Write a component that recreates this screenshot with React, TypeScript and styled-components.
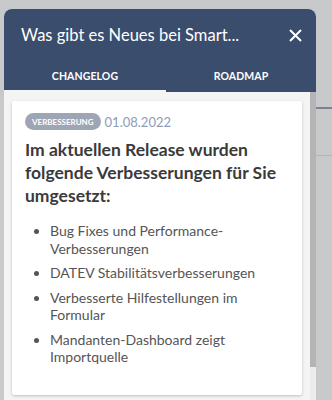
import styled, { createGlobalStyle } from 'styled-components'

const GlobalStyle = createGlobalStyle`
  html, body {
    margin: 0;
    padding: 0;
    background: #c8c9cb;
    font-family: Lato, 'Open Sans', sans-serif;
  }
`

const Page = styled.div`
  display: flex;
  align-items: flex-start;
  padding: 9px 0 0 4px;
  height: 391px;
  overflow: hidden;
`

const Panel = styled.div`
  width: 312px;
  height: 420px;
  flex-shrink: 0;
  background: #f4f4f4;
  border-radius: 8px 8px 0 0;
  overflow: hidden;
  display: flex;
  flex-direction: column;
`

const Header = styled.div`
  background: #3a4d6c;
  color: #ffffff;
`

const TitleRow = styled.div`
  display: flex;
  align-items: center;
  justify-content: space-between;
  height: 52px;
  padding: 0 14px 0 17px;
`

const Title = styled.h1`
  margin: 0;
  font-size: 16.5px;
  font-weight: 400;
  white-space: nowrap;
`

const CloseButton = styled.button`
  display: flex;
  padding: 0;
  border: 0;
  background: none;
  cursor: pointer;
`

const Tabs = styled.div`
  display: grid;
  grid-template-columns: 162px 1fr;
  height: 31px;
`

const Tab = styled.div<{ $active?: boolean }>`
  display: flex;
  align-items: center;
  justify-content: center;
  font-size: 10.5px;
  font-weight: 700;
  letter-spacing: 0.1px;
  color: #ffffff;
  border-bottom: 2px solid ${props => (props.$active ? '#f4f4f4' : 'transparent')};
`

const Body = styled.div`
  flex: 1;
  display: flex;
`

const Scroller = styled.div`
  flex: 1;
  padding: 9px 8px;
`

const ScrollTrack = styled.div`
  width: 6px;
  background: #ececec;
  display: flex;
  flex-direction: column;
`

const ScrollThumb = styled.div`
  height: 275px;
  background: #b4b4b4;
`

const Card = styled.div`
  background: #ffffff;
  border-radius: 2px;
  box-shadow: 0 1px 3px rgba(0, 0, 0, 0.22);
  padding: 12px 13px 29px;
`

const Meta = styled.div`
  display: flex;
  align-items: center;
  gap: 4px;
`

const Badge = styled.span`
  display: inline-flex;
  align-items: center;
  height: 17px;
  padding: 0 7px;
  border-radius: 9px;
  background: #9ea6b5;
  color: #ffffff;
  font-size: 8px;
  font-weight: 700;
  text-transform: uppercase;
`

const Date = styled.span`
  font-size: 13px;
  color: #8d9cb6;
`

const Heading = styled.h2`
  margin: 8px 0 0;
  font-size: 17.5px;
  font-weight: 700;
  line-height: 23px;
  color: #3a3a3a;
`

const List = styled.ul`
  margin: 15px 0 0;
  padding: 0 0 0 25px;
  font-size: 14px;
  line-height: 17.5px;
  color: #555555;
`

const Item = styled.li`
  margin-bottom: 7px;

  &:last-child {
    margin-bottom: 0;
  }
`

const Backdrop = styled.div`
  flex: 1;
  display: flex;
  flex-direction: column;
`

const Rule = styled.div<{ $top: number; $color: string; $size: number }>`
  margin-top: ${props => props.$top}px;
  border-top: ${props => props.$size}px solid ${props => props.$color};
`

const items = [
  'Bug Fixes und Performance-Verbesserungen',
  'DATEV Stabilitätsverbesserungen',
  'Verbesserte Hilfestellungen im Formular',
  'Mandanten-Dashboard zeigt Importquelle',
]

export default function App() {
  return (
    <>
      <GlobalStyle />
      <Page>
        <Panel>
          <Header>
            <TitleRow>
              <Title>Was gibt es Neues bei Smart...</Title>
              <CloseButton aria-label="Schließen">
                <svg width="13" height="13" viewBox="0 0 13 13">
                  <path d="M1 1L12 12M12 1L1 12" stroke="#ffffff" strokeWidth="2" />
                </svg>
              </CloseButton>
            </TitleRow>
            <Tabs>
              <Tab $active>CHANGELOG</Tab>
              <Tab>ROADMAP</Tab>
            </Tabs>
          </Header>
          <Body>
            <Scroller>
              <Card>
                <Meta>
                  <Badge>Verbesserung</Badge>
                  <Date>01.08.2022</Date>
                </Meta>
                <Heading>
                  Im aktuellen Release wurden folgende Verbesserungen für Sie umgesetzt:
                </Heading>
                <List>
                  {items.map(item => (
                    <Item key={item}>{item}</Item>
                  ))}
                </List>
              </Card>
            </Scroller>
            <ScrollTrack>
              <ScrollThumb />
            </ScrollTrack>
          </Body>
        </Panel>
        <Backdrop>
          <Rule $top={98} $color="#7b8294" $size={2} />
          <Rule $top={46} $color="#b2b3b6" $size={1} />
        </Backdrop>
      </Page>
    </>
  )
}
